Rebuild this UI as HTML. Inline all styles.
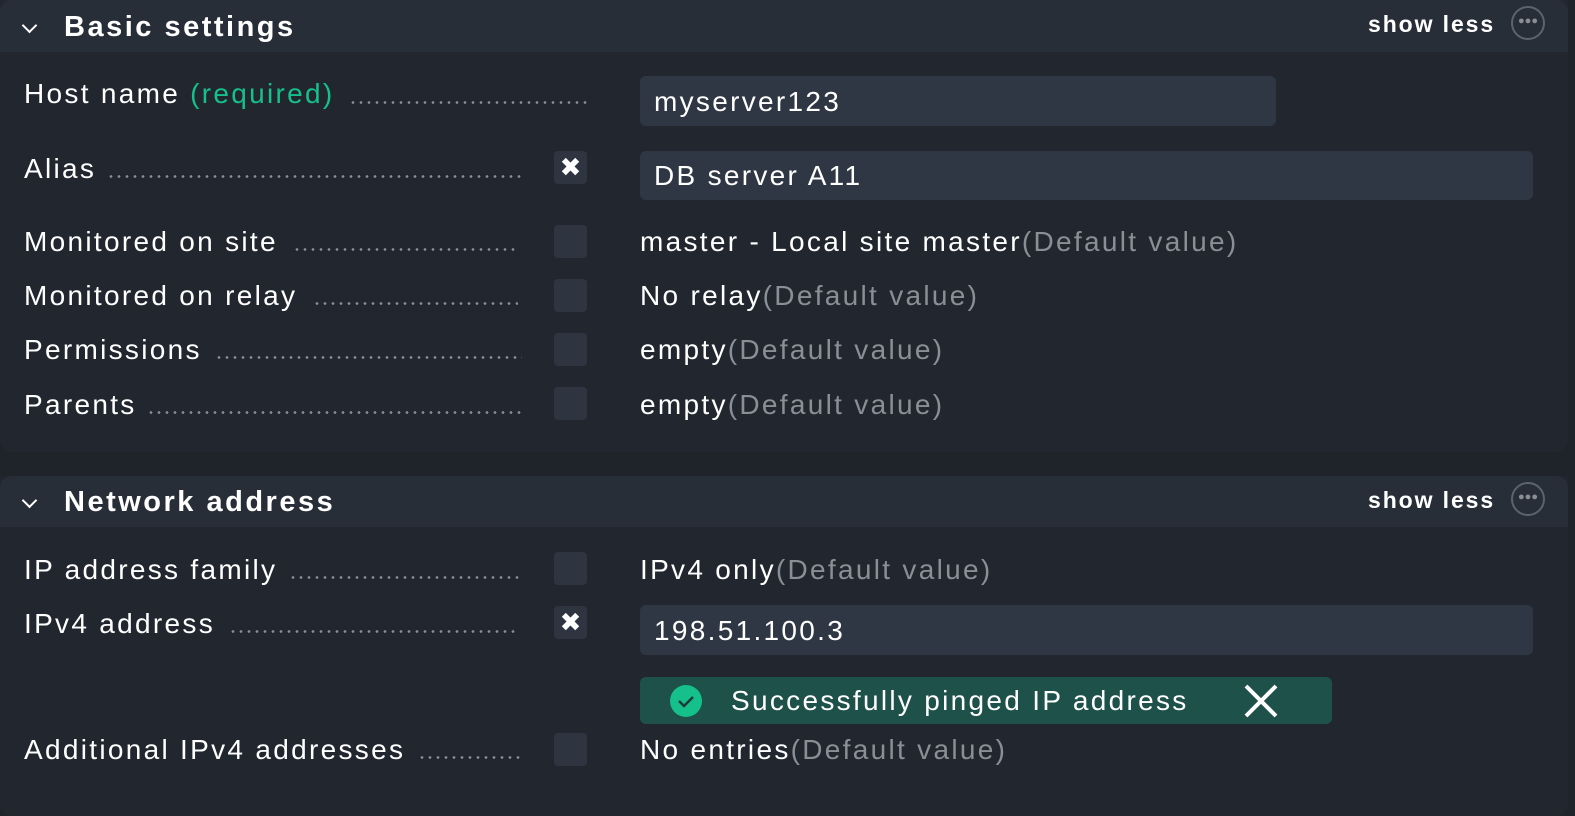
<!DOCTYPE html>
<html><head><meta charset="utf-8"><style>
*{margin:0;padding:0;box-sizing:border-box}
body{width:1575px;height:801px;background:#1f232a;font-family:"Liberation Sans",sans-serif;color:#fff;position:relative;overflow:hidden}
.sec{position:absolute;left:0;width:1568px;background:#22272f;border-radius:0 0 12px 12px}
.hd{position:absolute;left:0;width:1568px;height:52px;background:#282e38;border-radius:12px 12px 0 0}
.t{position:absolute;white-space:nowrap;font-size:28px;letter-spacing:2.3px;line-height:1}
.h{font-weight:bold;font-size:29px;letter-spacing:2.5px}
.sl{font-weight:bold;font-size:23px;letter-spacing:1.9px}
.dots{position:absolute;height:3px;background-image:radial-gradient(circle,#8a8f96 1.2px,transparent 1.5px);background-size:8px 3px}
.cb{position:absolute;left:554px;width:33px;height:33px;background:#2f3540;border-radius:4px;color:#fff;font-size:26px;text-align:center;line-height:33px}
.in{position:absolute;background:#2f3744;border-radius:6px}
.g{color:#8a8f96}
.circ{position:absolute;left:1511px;width:34px;height:34px;border:2px solid #5c636d;border-radius:50%;color:#8a8f96;font-size:11px;text-align:center;line-height:27px;letter-spacing:0}
.chev{position:absolute;left:24px;border-right:2.5px solid #fff;border-bottom:2.5px solid #fff;transform:rotate(45deg)}
</style></head><body>
<div class="sec" style="top:0;height:452px"></div>
<div class="hd" style="top:0"></div>
<div class="chev" style="top:20px;width:11px;height:11px"></div>
<div class="t h" style="left:64px;top:13px">Basic settings</div>
<div class="t sl" style="left:1368px;top:13px">show less</div>
<div class="circ" style="top:6px">●●●</div>

<div class="t" style="left:24px;top:80px">Host name <span style="color:#15c08a">(required)</span></div>
<div class="dots" style="left:349px;top:101px;width:242px"></div>
<div class="in" style="left:640px;top:76px;width:636px;height:50px"></div>
<div class="t" style="left:654px;top:88px">myserver123</div>

<div class="t" style="left:24px;top:155px">Alias</div>
<div class="dots" style="left:107px;top:175px;width:414px"></div>
<div class="cb" style="top:151px">✖</div>
<div class="in" style="left:640px;top:151px;width:893px;height:49px"></div>
<div class="t" style="left:654px;top:162px">DB server A11</div>

<div class="t" style="left:24px;top:228px">Monitored on site</div>
<div class="dots" style="left:293px;top:248px;width:225px"></div>
<div class="cb" style="top:225px"></div>
<div class="t" style="left:640px;top:228px">master - Local site master<span class="g">(Default value)</span></div>

<div class="t" style="left:24px;top:282px">Monitored on relay</div>
<div class="dots" style="left:313px;top:302px;width:205px"></div>
<div class="cb" style="top:279px"></div>
<div class="t" style="left:640px;top:282px">No relay<span class="g">(Default value)</span></div>

<div class="t" style="left:24px;top:336px">Permissions</div>
<div class="dots" style="left:215px;top:356px;width:307px"></div>
<div class="cb" style="top:333px"></div>
<div class="t" style="left:640px;top:336px">empty<span class="g">(Default value)</span></div>

<div class="t" style="left:24px;top:391px">Parents</div>
<div class="dots" style="left:147px;top:411px;width:375px"></div>
<div class="cb" style="top:387px"></div>
<div class="t" style="left:640px;top:391px">empty<span class="g">(Default value)</span></div>

<div class="sec" style="top:476px;height:340px"></div>
<div class="hd" style="top:476px;height:51px"></div>
<div class="chev" style="top:495px;width:11px;height:11px"></div>
<div class="t h" style="left:64px;top:488px">Network address</div>
<div class="t sl" style="left:1368px;top:489px">show less</div>
<div class="circ" style="top:482px">●●●</div>

<div class="t" style="left:24px;top:556px">IP address family</div>
<div class="dots" style="left:289px;top:576px;width:233px"></div>
<div class="cb" style="top:552px"></div>
<div class="t" style="left:640px;top:556px">IPv4 only<span class="g">(Default value)</span></div>

<div class="t" style="left:24px;top:610px">IPv4 address</div>
<div class="dots" style="left:229px;top:630px;width:290px"></div>
<div class="cb" style="top:606px">✖</div>
<div class="in" style="left:640px;top:605px;width:893px;height:50px"></div>
<div class="t" style="left:654px;top:617px">198.51.100.3</div>

<div style="position:absolute;left:640px;top:677px;width:692px;height:47px;background:#1d5149;border-radius:6px"></div>
<svg style="position:absolute;left:669px;top:684px" width="34" height="34" viewBox="0 0 34 34"><circle cx="17" cy="17" r="16" fill="#15c08a"/><path d="M10 17l5 5 9-9" fill="none" stroke="#1d3b3a" stroke-width="2.5"/></svg>
<div class="t" style="left:731px;top:687px">Successfully pinged IP address</div>
<svg style="position:absolute;left:1243px;top:683px" width="36" height="36" viewBox="0 0 36 36"><path d="M3 3L33 33M33 3L3 33" stroke="#fff" stroke-width="4"/></svg>

<div class="t" style="left:24px;top:736px">Additional IPv4 addresses</div>
<div class="dots" style="left:418px;top:756px;width:102px"></div>
<div class="cb" style="top:733px"></div>
<div class="t" style="left:640px;top:736px">No entries<span class="g">(Default value)</span></div>
</body></html>
